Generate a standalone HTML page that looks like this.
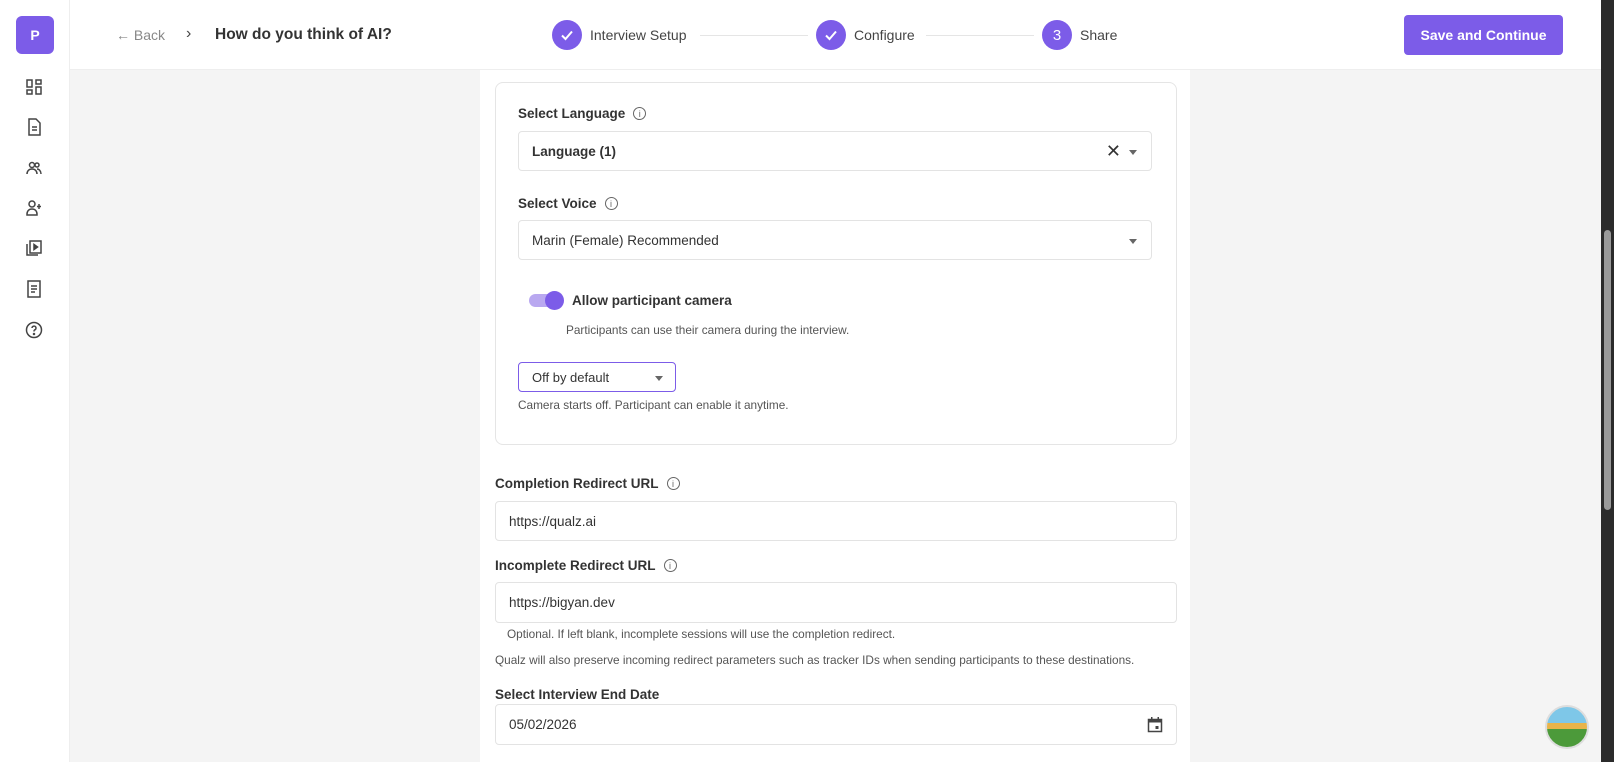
<!DOCTYPE html>
<html><head><meta charset="utf-8"><style>
*{box-sizing:border-box;margin:0;padding:0}
body{width:1614px;height:762px;overflow:hidden;font-family:"Liberation Sans",sans-serif;background:#f4f4f4;position:relative;color:#333}
.abs{position:absolute}
.side{left:0;top:0;width:70px;height:762px;background:#fff;border-right:1px solid #eee}
.hdr{left:70px;top:0;width:1531px;height:70px;background:#fff;border-bottom:1px solid #eee}
.logo{left:16px;top:16px;width:38px;height:38px;background:#7c5ce8;border-radius:6px;color:#fff;font-weight:bold;font-size:14px;display:flex;align-items:center;justify-content:center}
.ic{left:24px;width:20px;height:20px}
.circ{width:30px;height:30px;border-radius:50%;background:#7c5ce8;color:#fff;display:flex;align-items:center;justify-content:center;font-size:15px;top:20px}
.st{top:27px;font-size:14px;color:#444}
.line{top:35px;height:1px;background:#e5e5e5}
.btn{left:1404px;top:15px;width:159px;height:40px;background:#7c5ce8;border-radius:4px;color:#fff;font-weight:bold;font-size:14px;display:flex;align-items:center;justify-content:center}
.main{left:480px;top:70px;width:710px;height:692px;background:#fff}
.card{left:495px;top:82px;width:682px;height:363px;border:1px solid #e5e5e5;border-radius:8px;background:#fff}
.lbl{font-size:13.5px;font-weight:bold;color:#333;display:flex;align-items:center;gap:8px}
.info{width:13px;height:13px;border:1px solid #666;border-radius:50%;font-size:9px;display:inline-flex;align-items:center;justify-content:center;color:#666;font-weight:normal}
.inp{border:1px solid #e3e3e3;border-radius:4px;background:#fff;font-size:13.5px;display:flex;align-items:center;padding-left:13px;color:#333}
.car{position:absolute;width:0;height:0;border-left:4.5px solid transparent;border-right:4.5px solid transparent;border-top:5px solid #666}
.sm{font-size:11.8px;color:#555}
.sb{left:1601px;top:0;width:13px;height:762px;background:#2b2b2b}
</style></head><body>
<div class="abs side"></div>
<div class="abs logo">P</div>
<svg class="abs ic" style="top:77px" viewBox="0 0 20 20" fill="none" stroke="#444" stroke-width="1.5"><rect x="3" y="3" width="5" height="7"/><rect x="12" y="3" width="5" height="4"/><rect x="3" y="13" width="5" height="4"/><rect x="12" y="10" width="5" height="7"/></svg>
<svg class="abs ic" style="top:117px" viewBox="0 0 20 20" fill="none" stroke="#444" stroke-width="1.5"><path d="M5 2h7l4 4v12H5z"/><path d="M8 10h5M8 13h5"/></svg>
<svg class="abs ic" style="top:158px" viewBox="0 0 20 20" fill="none" stroke="#444" stroke-width="1.5"><circle cx="8" cy="7" r="2.5"/><circle cx="13" cy="7" r="2"/><path d="M3 16c0-3 2-5 5-5s5 2 5 5M13 11c2 0 4 2 4 5"/></svg>
<svg class="abs ic" style="top:198px" viewBox="0 0 20 20" fill="none" stroke="#444" stroke-width="1.5"><circle cx="8" cy="6" r="3"/><path d="M3 17v-1c0-3 2-5 5-5s5 2 5 5v1zM15 6v5M13 8.5h4"/></svg>
<svg class="abs ic" style="top:238px" viewBox="0 0 20 20" fill="none" stroke="#444" stroke-width="1.5"><rect x="6" y="3" width="11" height="12"/><path d="M3 6v11h11"/><path d="M10 6.5v5l3.5-2.5z" fill="#444"/></svg>
<svg class="abs ic" style="top:279px" viewBox="0 0 20 20" fill="none" stroke="#444" stroke-width="1.5"><rect x="4" y="2" width="12" height="16"/><path d="M7 7h6M7 10h6M7 13h4"/></svg>
<svg class="abs ic" style="top:320px" viewBox="0 0 20 20" fill="none" stroke="#444" stroke-width="1.5"><circle cx="10" cy="10" r="7.5"/><path d="M8 8a2 2 0 1 1 2.5 2c-.5.3-.5.8-.5 1.5"/><circle cx="10" cy="14" r=".5" fill="#444"/></svg>

<div class="abs hdr"></div>
<div class="abs" style="left:116px;top:27px;font-size:14px;color:#888">&#8592; Back</div>
<div class="abs" style="left:186px;top:25px;font-size:16px;color:#444">&#8250;</div>
<div class="abs" style="left:215px;top:26px;font-size:15.5px;font-weight:bold;color:#333">How do you think of AI?</div>
<div class="abs circ" style="left:552px"><svg width="16" height="16" viewBox="0 0 16 16"><path d="M3 8.5l3.5 3.5L13 4.5" stroke="#fff" stroke-width="2" fill="none"/></svg></div>
<div class="abs st" style="left:590px">Interview Setup</div>
<div class="abs line" style="left:700px;width:108px"></div>
<div class="abs circ" style="left:816px"><svg width="16" height="16" viewBox="0 0 16 16"><path d="M3 8.5l3.5 3.5L13 4.5" stroke="#fff" stroke-width="2" fill="none"/></svg></div>
<div class="abs st" style="left:854px">Configure</div>
<div class="abs line" style="left:926px;width:108px"></div>
<div class="abs circ" style="left:1042px">3</div>
<div class="abs st" style="left:1080px">Share</div>
<div class="abs btn">Save and Continue</div>

<div class="abs main"></div>
<div class="abs card"></div>
<div class="abs lbl" style="left:518px;top:106px">Select Language <span class="info">i</span></div>
<div class="abs inp" style="left:518px;top:131px;width:634px;height:40px;font-weight:bold">Language (1)
<span style="position:absolute;right:30px;top:9px;font-size:18px;font-weight:normal;color:#333">&#10005;</span><span class="car" style="right:14px;top:18px"></span></div>
<div class="abs lbl" style="left:518px;top:196px">Select Voice <span class="info">i</span></div>
<div class="abs inp" style="left:518px;top:220px;width:634px;height:40px">Marin (Female) Recommended<span class="car" style="right:14px;top:18px"></span></div>
<div class="abs" style="left:529px;top:294px;width:32px;height:13px;border-radius:7px;background:#b9a8f0"></div>
<div class="abs" style="left:545px;top:291px;width:19px;height:19px;border-radius:50%;background:#7c5ce8"></div>
<div class="abs" style="left:572px;top:293px;font-size:13.5px;font-weight:bold;color:#333">Allow participant camera</div>
<div class="abs sm" style="left:566px;top:323px">Participants can use their camera during the interview.</div>
<div class="abs inp" style="left:518px;top:362px;width:158px;height:30px;border:1.5px solid #7c5ce8;font-size:13px">Off by default<span class="car" style="right:12px;top:13px"></span></div>
<div class="abs sm" style="left:518px;top:398px">Camera starts off. Participant can enable it anytime.</div>

<div class="abs lbl" style="left:495px;top:476px">Completion Redirect URL <span class="info">i</span></div>
<div class="abs inp" style="left:495px;top:501px;width:682px;height:40px">https://qualz.ai</div>
<div class="abs lbl" style="left:495px;top:558px">Incomplete Redirect URL <span class="info">i</span></div>
<div class="abs inp" style="left:495px;top:582px;width:682px;height:41px">https://bigyan.dev</div>
<div class="abs sm" style="left:507px;top:627px">Optional. If left blank, incomplete sessions will use the completion redirect.</div>
<div class="abs sm" style="left:495px;top:653px">Qualz will also preserve incoming redirect parameters such as tracker IDs when sending participants to these destinations.</div>
<div class="abs lbl" style="left:495px;top:687px">Select Interview End Date</div>
<div class="abs inp" style="left:495px;top:704px;width:682px;height:41px">05/02/2026
<svg style="position:absolute;right:12px;top:11px" width="18" height="18" viewBox="0 0 18 18"><rect x="2.5" y="3.5" width="13" height="12" fill="none" stroke="#444" stroke-width="1.5"/><rect x="2.5" y="3.5" width="13" height="3" fill="#444"/><rect x="5" y="1" width="1.5" height="3" fill="#444"/><rect x="11.5" y="1" width="1.5" height="3" fill="#444"/><rect x="9.5" y="10" width="3" height="3" fill="#444"/></svg></div>

<div class="abs" style="left:1545px;top:705px;width:44px;height:44px;border-radius:50%;background:linear-gradient(#7ec7e8 0 40%,#e8b44a 40% 55%,#4c9a3a 55%);border:2px solid #ddd"></div>
<div class="abs sb"></div>
<div class="abs" style="left:1604px;top:230px;width:7px;height:280px;background:#9a9a9a;border-radius:4px"></div>
</body></html>
